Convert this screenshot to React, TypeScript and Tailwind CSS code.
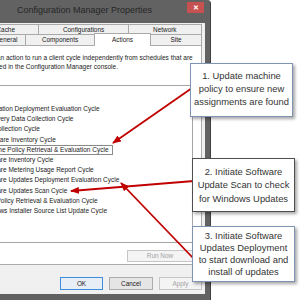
const items = [
  "Application Deployment Evaluation Cycle",
  "Discovery Data Collection Cycle",
  "File Collection Cycle",
  "Hardware Inventory Cycle",
  "Machine Policy Retrieval & Evaluation Cycle",
  "Software Inventory Cycle",
  "Software Metering Usage Report Cycle",
  "Software Updates Deployment Evaluation Cycle",
  "Software Updates Scan Cycle",
  "User Policy Retrieval & Evaluation Cycle",
  "Windows Installer Source List Update Cycle",
];

function Tab({ label, w }: { label: string; w: string }) {
  return (
    <div
      className={`${w} h-full -ml-px first:ml-0 border border-b-0 border-[#a9a9a9] bg-[#f0f0f0] flex items-center justify-center whitespace-nowrap`}
    >
      {label}
    </div>
  );
}

export default function App() {
  return (
    <div className="relative w-[300px] h-[300px] overflow-hidden bg-white font-['Liberation_Sans',Arial,sans-serif] text-[#1a1a1a]">
      {/* Dialog window */}
      <div className="ml-[-34px] w-[245px] h-[300px] flex flex-col bg-[#626262] rounded-tr-[4px] border-r border-[#404040]">
        {/* Title bar */}
        <div className="h-[23px] shrink-0 flex items-start">
          <div className="flex-1 pl-[51px] pt-[4px] text-[9px] leading-[12px] text-[#262626] whitespace-nowrap">
            Configuration Manager Properties
          </div>
          <div className="mt-[2px] mr-[6px] w-[17px] h-[11px] bg-[#c75050] flex items-center justify-center text-white text-[7px] leading-none font-bold">
            ✕
          </div>
        </div>
        {/* Client area */}
        <div className="flex-1 ml-[6px] mr-[5px] mb-[6px] bg-[#f0f0f0] flex flex-col pt-[1px] text-[6.4px]">
          {/* Tab row 1 */}
          <div className="h-[10px] flex justify-end pr-[3px]">
            <Tab label="Cache" w="w-[68px]" />
            <Tab label="Configurations" w="w-[91px]" />
            <Tab label="Network" w="w-[75px]" />
          </div>
          {/* Tab row 2 */}
          <div className="h-[11px] flex justify-end items-end pr-[3px]">
            <Tab label="General" w="w-[40px]" />
            <Tab label="Components" w="w-[70px]" />
            <div className="w-[57px] h-[13px] -ml-px relative top-[1px] z-10 bg-white border border-b-0 border-[#a9a9a9] flex items-center justify-center">
              Actions
            </div>
            <Tab label="Site" w="w-[52px]" />
          </div>
          {/* Panel */}
          <div className="ml-[4px] mr-[3px] h-[220px] bg-white border border-[#acacac] pl-[6px] pr-[8px] pt-[7px] flex flex-col text-[6.5px]">
            <div className="leading-[9px] whitespace-nowrap">
              <div className="ml-[-6px]">
                Select an action to run a client cycle independently from schedules that are
              </div>
              <div className="ml-[2px]">defined in the Configuration Manager console.</div>
            </div>
            <div className="mt-[14px] ml-[-3px] h-[158px] border border-[#a5a5a5] bg-white pt-[18px] flex flex-col">
              {items.map((it) => (
                <div key={it} className="h-[10.2px] leading-[10.2px] whitespace-nowrap">
                  {it.startsWith("Machine") ? (
                    <span className="inline-block h-[10.2px] pr-[4px] outline outline-1 outline-offset-[-1px] outline-[#8a8a8a]">
                      {it}
                    </span>
                  ) : (
                    it
                  )}
                </div>
              ))}
            </div>
            <div className="mt-[7px] self-end w-[66px] h-[12px] border border-[#c6c6c6] bg-[#f4f4f4] text-[#a3a3a3] flex items-center justify-center text-[6.4px]">
              Run Now
            </div>
          </div>
          {/* Buttons */}
          <div className="mt-[12px] flex justify-end gap-[6px] pr-[3px]">
            <div className="w-[43px] h-[13px] border border-[#3c8ddc] bg-[#e8eef5] flex items-center justify-center">
              OK
            </div>
            <div className="w-[44px] h-[13px] border border-[#acacac] bg-[#e5e5e5] flex items-center justify-center">
              Cancel
            </div>
            <div className="w-[43px] h-[13px] border border-[#c6c6c6] bg-[#f4f4f4] text-[#a3a3a3] flex items-center justify-center">
              Apply
            </div>
          </div>
        </div>
      </div>

      {/* Arrows */}
      <svg className="absolute inset-0 pointer-events-none" width="300" height="300" viewBox="0 0 300 300">
        <defs>
          <marker id="ah" markerWidth="9" markerHeight="7" refX="8" refY="3.5" orient="auto" markerUnits="userSpaceOnUse">
            <path d="M0,0 L9,3.5 L0,7 z" fill="#c00000" />
          </marker>
        </defs>
        <line x1="192" y1="88" x2="113" y2="143" stroke="#c00000" strokeWidth="1.8" markerEnd="url(#ah)" />
        <line x1="194" y1="181" x2="71" y2="191" stroke="#c00000" strokeWidth="1.8" markerEnd="url(#ah)" />
        <line x1="194" y1="259" x2="121" y2="183" stroke="#c00000" strokeWidth="1.8" markerEnd="url(#ah)" />
      </svg>

      {/* Callouts */}
      <div className="absolute left-[190px] top-[63px] w-[103px] h-[54px] bg-white border border-[#7f93b4] shadow-[2px_2px_3px_rgba(0,0,0,0.35)] flex items-center justify-center text-center text-[9.4px] leading-[13px] text-[#333] pb-[3px]">
        <div>
          1. Update machine
          <br />
          policy to ensure new
          <br />
          assignments are found
        </div>
      </div>
      <div className="absolute left-[192px] top-[158px] w-[103px] h-[54px] bg-white border border-[#4f4f4f] shadow-[2px_2px_3px_rgba(0,0,0,0.35)] flex items-center justify-center text-center text-[9.4px] leading-[13.5px] text-[#333]">
        <div>
          2. Initiate Software
          <br />
          Update Scan to check
          <br />
          for Windows Updates
        </div>
      </div>
      <div className="absolute left-[192px] top-[226px] w-[103px] h-[56px] bg-white border border-[#7f93b4] shadow-[2px_2px_3px_rgba(0,0,0,0.35)] flex items-center justify-center text-center text-[9.4px] leading-[12.2px] text-[#333]">
        <div>
          3. Initiate Software
          <br />
          Updates Deployment
          <br />
          to start download and
          <br />
          install of updates
        </div>
      </div>
    </div>
  );
}
